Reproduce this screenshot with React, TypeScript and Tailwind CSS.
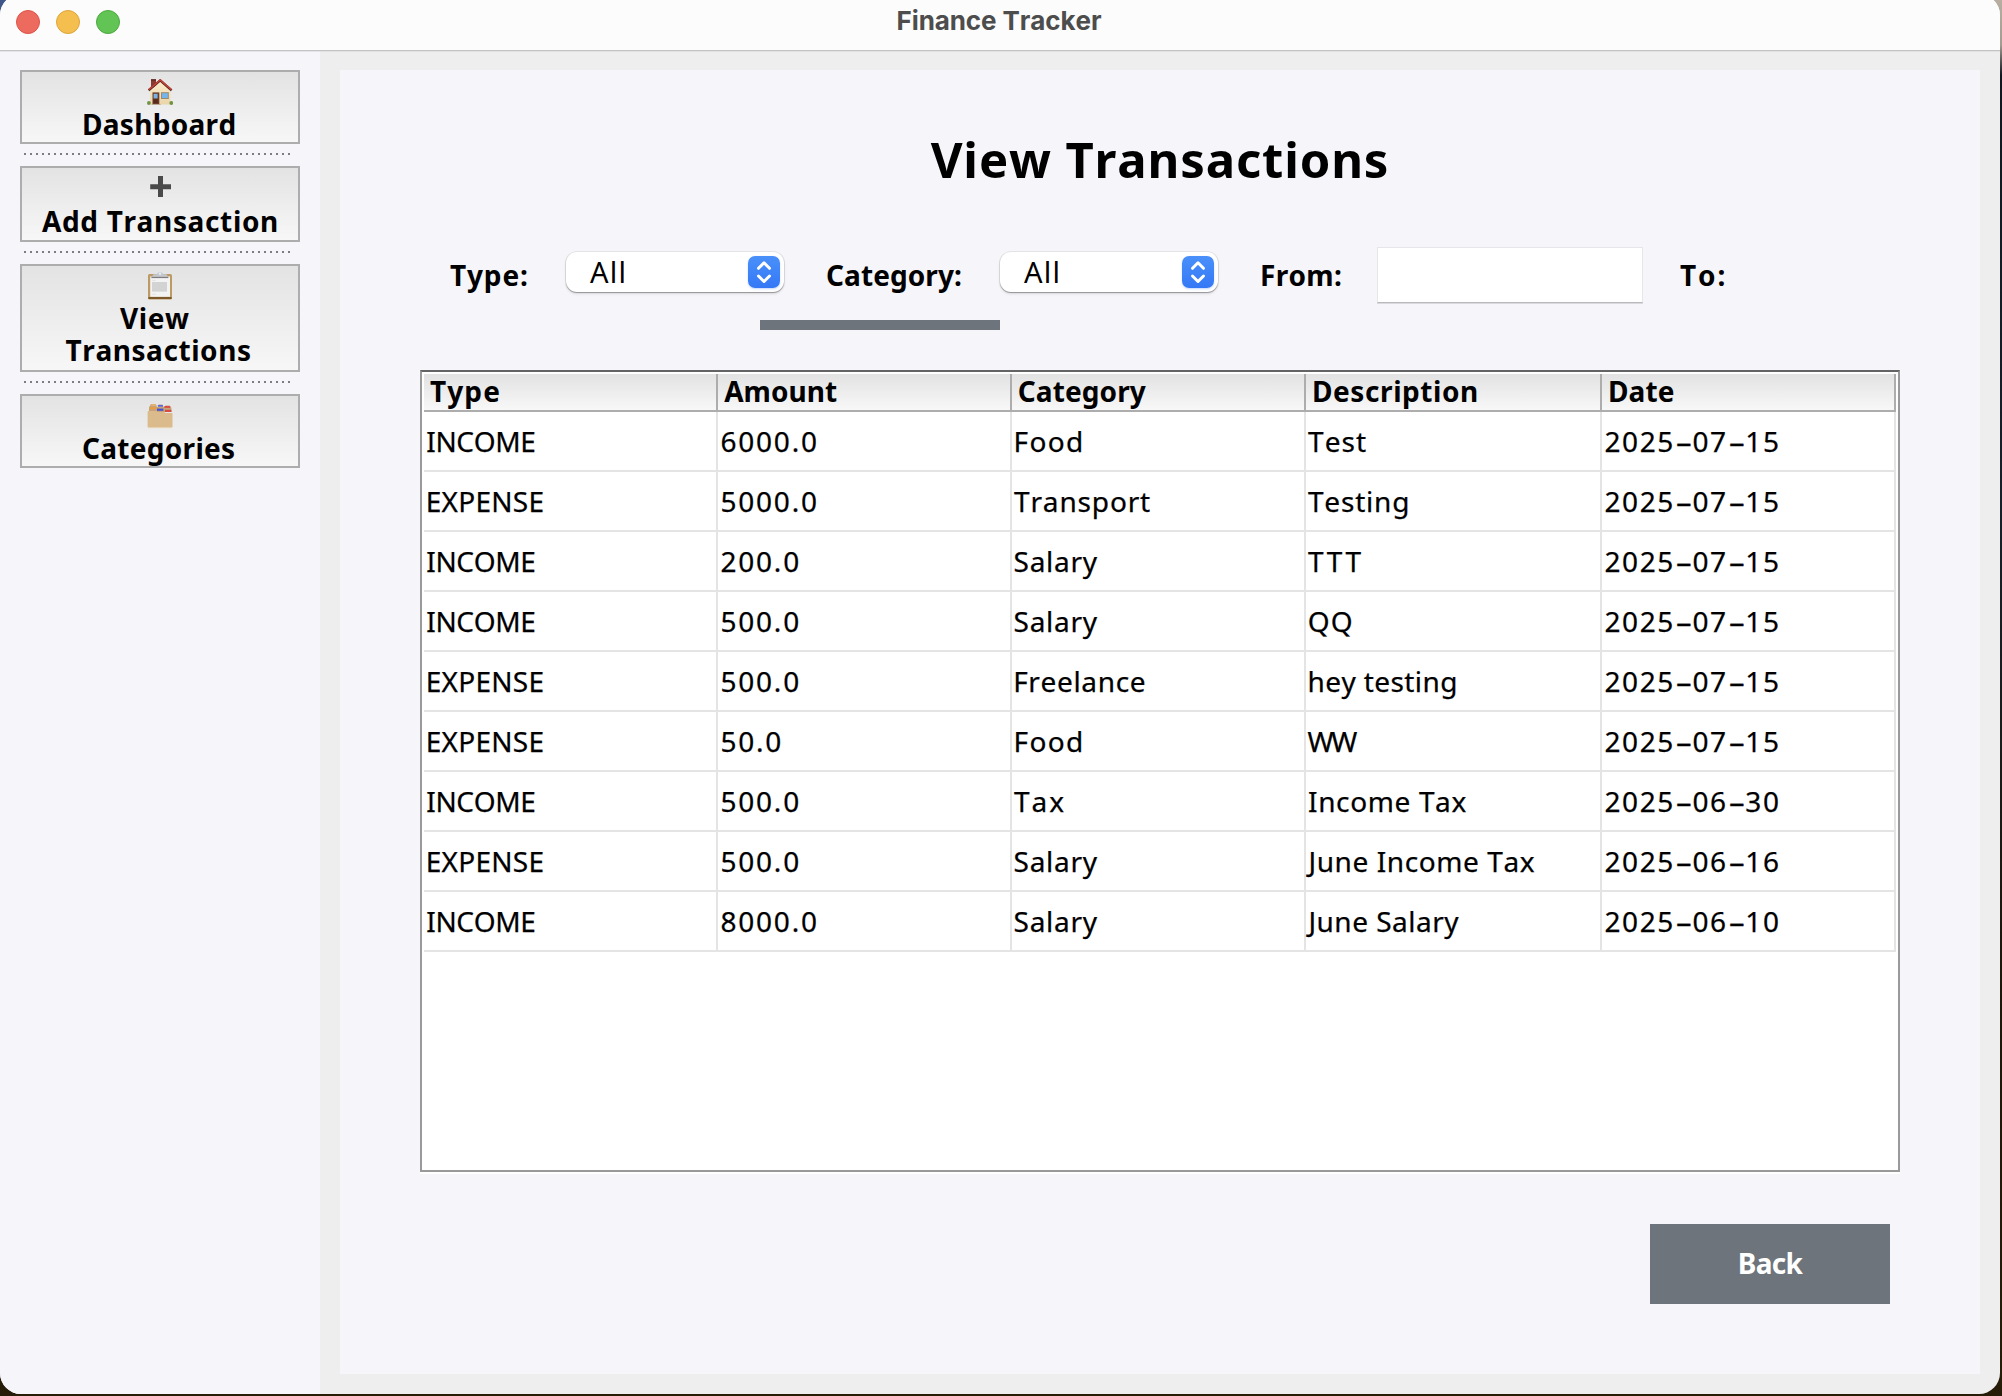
import type { ReactNode } from "react";

function HouseIcon() {
  return (
    <svg viewBox="0 0 26 26" className="h-[26px] w-[26px]">
      <defs>
        <linearGradient id="wall" x1="0" y1="0" x2="0" y2="1">
          <stop offset="0" stopColor="#fbeccb" />
          <stop offset="1" stopColor="#ead5aa" />
        </linearGradient>
      </defs>
      <rect x="4" y="0.3" width="5" height="8" fill="#8a3a30" />
      <rect x="4" y="0.3" width="5" height="1.4" fill="#5d2a24" />
      <path d="M3 12 L13.2 2 L23.4 12 V25.4 H3 Z" fill="url(#wall)" />
      <path d="M1.6 11.4 L13.2 1.4 L24.6 11.4" fill="none" stroke="#5e231e" strokeWidth="2.4" />
      <path d="M1.8 10.6 L13.2 0.9 L24.4 10.6" fill="none" stroke="#c2453b" strokeWidth="1.4" />
      <rect x="5.5" y="13.4" width="6.8" height="12" fill="#6d3a27" />
      <rect x="6.6" y="14.8" width="4" height="4.6" fill="#79b3e6" />
      <rect x="6.4" y="20.4" width="4.4" height="3.6" fill="#57291b" />
      <rect x="14" y="13.2" width="7.8" height="6.8" fill="#9b8a6b" />
      <rect x="15" y="14.2" width="5.8" height="4.8" fill="#76b4ee" />
      <rect x="4.6" y="25" width="9" height="1" fill="#b9ab93" />
      <ellipse cx="1.9" cy="24" rx="1.9" ry="1.9" fill="#6f9443" />
      <ellipse cx="24.3" cy="24" rx="1.9" ry="1.9" fill="#6f9443" />
    </svg>
  );
}

function PlusIcon() {
  return (
    <svg viewBox="0 0 26 26" className="h-[26px] w-[26px]">
      <path d="M11 1h5v8.2h8v5h-8V22h-5v-7.8H3.2v-5H11z" fill="#4a4a4a" />
    </svg>
  );
}

function ClipboardIcon() {
  return (
    <svg viewBox="0 0 26 26" className="h-[26px] w-[26px] overflow-visible">
      <rect x="1" y="1" width="24" height="25.6" rx="1.6" fill="#bd9a63" />
      <rect x="1.4" y="24" width="23.2" height="2" fill="#7c5a2c" />
      <rect x="3.2" y="3.4" width="19.8" height="20.4" fill="#f3f3f3" />
      <rect x="5" y="9" width="15" height="9.6" fill="#d3d3d3" />
      <path d="M5.4 7.4h3M5.4 21.2h3.4" stroke="#d9d9d9" strokeWidth="0.8" />
      <rect x="4.4" y="3.6" width="17" height="1.5" fill="#7d7d80" />
      <path d="M5 3.6L6.6 1.2h3.2L11 -0.6h4L16.2 1.2h3.2L21 3.6z" fill="#c3c9d0" />
      <circle cx="13" cy="0.8" r="1.1" fill="#eef2f6" />
    </svg>
  );
}

function FolderIcon() {
  return (
    <svg viewBox="0 0 26 26" className="h-[26px] w-[26px]">
      <path d="M2 9V4.6l1.8-3.4L4.6 1h4L10 4h1l0.6-2.4h3.8L16.6 4h1l0.8-1.6h4.2L24.4 5v4z" fill="#c3a377" />
      <path d="M4.6 1h4l1 2H3.8z" fill="#e3b172" />
      <rect x="3" y="4.2" width="6.4" height="2" fill="#ee9b3d" />
      <rect x="10.8" y="2" width="5.2" height="1.6" fill="#5a68e8" />
      <rect x="10" y="5.6" width="6.4" height="2.2" fill="#4450d6" />
      <rect x="17.4" y="3" width="5.8" height="1.9" fill="#dc4d45" />
      <rect x="18" y="6.8" width="6.4" height="2.2" fill="#d64a42" />
      <path d="M0.6 8.9q0-0.8 1-0.8h8l1 1h6.8l1 0.8h6.2q0.9 0 0.9 0.9V23.4q0 1.4-1.2 1.4H1.8q-1.2 0-1.2-1.4z" fill="#dbba8b" />
      <rect x="1" y="24.4" width="24" height="0.8" fill="#e9d9bd" />
    </svg>
  );
}

function DottedRule() {
  return (
    <div className="mt-[9px] mb-[11px] ml-1 h-0.5 w-[266px] bg-[repeating-linear-gradient(90deg,#7c7c82_0px,#7c7c82_2px,transparent_2px,transparent_6px)]" />
  );
}

function NavButton({ className, icon, children }: { className: string; icon: ReactNode; children: ReactNode }) {
  return (
    <button
      className={`${className} flex w-[280px] flex-col items-start border-2 border-[#adadad] bg-linear-to-b from-[#e3e3e3] to-[#f7f7f7] pt-[7px] text-left text-[28px] leading-8 font-bold text-black`}
    >
      <span className="ml-[125px] block h-[26px]">{icon}</span>
      {children}
    </button>
  );
}

function Select() {
  return (
    <div className="mt-[5px] flex h-10 w-[218px] items-center justify-between rounded-[11px] bg-white pr-1 pl-[24px] shadow-[0_0_0_1px_rgba(0,0,0,0.07),0_1px_1px_rgba(0,0,0,0.28),0_2px_3px_rgba(0,0,0,0.1)]">
      <span className="text-[29px] leading-[42px] tracking-[1.2px]">All</span>
      <span className="flex h-8 w-8 rounded-[7px] bg-linear-to-b from-[#4a90fa] to-[#3478f6] shadow-[0_1px_2px_rgba(52,120,246,0.3)]">
        <svg viewBox="0 0 32 32" className="h-8 w-8" fill="none" stroke="#fff" strokeWidth="3" strokeLinecap="round" strokeLinejoin="round">
          <path d="M10.5 12.3L16 6.8l5.5 5.5M10.5 20L16 25.5l5.5-5.5" />
        </svg>
      </span>
    </div>
  );
}

type Cell = { text: string; fit: string };

const INCOME: Cell = { text: "INCOME", fit: "pl-[2.3px] tracking-[-0.35px]" };
const EXPENSE: Cell = { text: "EXPENSE", fit: "pl-[1.8px] tracking-[0.25px]" };
const SALARY: Cell = { text: "Salary", fit: "pl-[1.6px] tracking-[0.7px]" };
const FOOD: Cell = { text: "Food", fit: "pl-[1.5px] tracking-[1.4px]" };
const amount = (text: string): Cell => ({ text, fit: "pl-[2.4px] tracking-[1.8px]" });

const ROWS: { cells: Cell[]; date: string }[] = [
  { cells: [INCOME, amount("6000.0"), FOOD, { text: "Test", fit: "pl-[2px] tracking-[1.1px]" }], date: "2025-07-15" },
  { cells: [EXPENSE, amount("5000.0"), { text: "Transport", fit: "pl-[2px] tracking-[0.85px]" }, { text: "Testing", fit: "pl-[2px] tracking-[0.8px]" }], date: "2025-07-15" },
  { cells: [INCOME, amount("200.0"), SALARY, { text: "TTT", fit: "pl-[2px] tracking-[3.2px]" }], date: "2025-07-15" },
  { cells: [INCOME, amount("500.0"), SALARY, { text: "QQ", fit: "pl-[1.7px] tracking-[1.2px]" }], date: "2025-07-15" },
  { cells: [EXPENSE, amount("500.0"), { text: "Freelance", fit: "pl-[1.2px] tracking-[0.65px]" }, { text: "hey testing", fit: "pl-[1.6px] tracking-[0.4px]" }], date: "2025-07-15" },
  { cells: [EXPENSE, amount("50.0"), FOOD, { text: "WW", fit: "pl-[1.6px] tracking-[-2.4px]" }], date: "2025-07-15" },
  { cells: [INCOME, amount("500.0"), { text: "Tax", fit: "pl-[2px] tracking-[2px]" }, { text: "Income Tax", fit: "pl-[2px] tracking-[0.64px]" }], date: "2025-06-30" },
  { cells: [EXPENSE, amount("500.0"), SALARY, { text: "June Income Tax", fit: "pl-[2.4px] tracking-[0.6px]" }], date: "2025-06-16" },
  { cells: [INCOME, amount("8000.0"), SALARY, { text: "June Salary", fit: "pl-[2.4px] tracking-[0.5px]" }], date: "2025-06-10" },
];

const HEADERS: Cell[] = [
  { text: "Type", fit: "pl-[6px] tracking-[1.1px]" },
  { text: "Amount", fit: "pl-[6.2px] tracking-[0.05px]" },
  { text: "Category", fit: "pl-[5.8px] tracking-[0.1px]" },
  { text: "Description", fit: "pl-[6px] tracking-[0.58px]" },
  { text: "Date", fit: "pl-[6px] tracking-[0.1px]" },
];

function DateText({ value }: { value: string }) {
  return (
    <>
      {value.split("").map((ch, i) =>
        ch === "-" ? (
          <span key={i} className="inline-block w-[17.6px] scale-x-[1.9] text-center tracking-normal">
            -
          </span>
        ) : (
          ch
        ),
      )}
    </>
  );
}

function TransactionsTable() {
  return (
    <div className="mt-10 ml-20 h-[802px] w-[1480px] border-2 border-[#999999] border-t-[#646464] bg-white p-0.5 shadow-[0_2px_0_#ffffff]">
      <div className="grid grid-cols-[294px_294px_294px_296px_294px] border-b-2 border-[#adadad] bg-linear-to-b from-[#e2e2e2] to-[#f8f8f8] text-[28px] leading-[34px] font-bold">
        {HEADERS.map((h) => (
          <div key={h.text} className={`h-9 border-r-2 border-[#adadad] whitespace-nowrap ${h.fit}`}>
            {h.text}
          </div>
        ))}
      </div>
      {ROWS.map((row, i) => (
        <div key={i} className="grid h-[60px] grid-cols-[294px_294px_294px_296px_294px] border-b-2 border-[#e4e4e4] text-[28px] leading-[58px] [-webkit-text-stroke:0.25px_black]">
          {row.cells.map((c, j) => (
            <div key={j} className={`border-r-2 border-[#e4e4e4] whitespace-nowrap ${c.fit}`}>
              {c.text}
            </div>
          ))}
          <div className="border-r-2 border-[#e4e4e4] pl-[2.4px] tracking-[1.6px] whitespace-nowrap">
            <DateText value={row.date} />
          </div>
        </div>
      ))}
    </div>
  );
}

export default function App() {
  return (
    <div className="h-[1396px] w-[2002px] overflow-hidden bg-[linear-gradient(180deg,#b8afa2_0px,#a39a90_45px,#10171f_75px,#16202a_500px,#1d1509_1000px,#261c08_1396px)] [font-kerning:none]">
      <div className="h-full bg-[linear-gradient(135deg,#3f5688_0px,#3f5688_30px,transparent_30px)]">
        <div className="flex h-full flex-col font-['Noto_Sans',sans-serif] text-black">
          <div className="-mt-1.5 flex h-[1400px] w-[2000px] shrink-0 flex-col overflow-hidden rounded-[21px] bg-[#eeeeee]">
            <header className="flex h-[57px] shrink-0 border-b border-[#c3c3c3] bg-[#fcfcfc] pt-1.5">
              <div className="mt-2.5 ml-4 flex w-[280px] gap-4">
                <span className="h-6 w-6 rounded-full border border-[#dc5349] bg-[#ed6a5f]" />
                <span className="h-6 w-6 rounded-full border border-[#dda43c] bg-[#f5bf4f]" />
                <span className="h-6 w-6 rounded-full border border-[#4ca93f] bg-[#61c454]" />
              </div>
              <h1 className="mr-[298px] flex-1 text-center font-['Inter',sans-serif] text-[26px] leading-[41px] font-bold tracking-[-0.08px] text-[#4d4d4d]">
                Finance Tracker
              </h1>
            </header>

            <div className="flex h-[1343px] shadow-[inset_0_1px_0_#e2e2e2]">
              <nav className="flex w-80 flex-col bg-[#f5f5fa] pt-[19px] pl-5 shadow-[inset_0_1px_0_#e4e4e8]">
                <NavButton className="h-[74px]" icon={<HouseIcon />}>
                  <span className="mt-[3px] ml-[60px] tracking-[0.3px]">Dashboard</span>
                </NavButton>
                <DottedRule />
                <NavButton className="h-[76px]" icon={<PlusIcon />}>
                  <span className="mt-1 ml-5 tracking-[0.65px]">Add Transaction</span>
                </NavButton>
                <DottedRule />
                <NavButton className="h-[108px]" icon={<ClipboardIcon />}>
                  <span className="mt-[3px] ml-[98px] tracking-[0.6px]">View</span>
                  <span className="ml-[43.6px] tracking-[0.56px]">Transactions</span>
                </NavButton>
                <DottedRule />
                <NavButton className="h-[74px]" icon={<FolderIcon />}>
                  <span className="mt-[3px] ml-[60px] tracking-[0.3px]">Categories</span>
                </NavButton>
              </nav>

              <main className="mt-[19px] ml-5 h-[1304px] w-[1640px] bg-[#f5f5fa]">
                <h2 className="mt-[57px] text-center text-[49px] leading-[64px] font-bold tracking-[0.86px]">View Transactions</h2>

                <div className="mt-14 flex h-14 items-start text-[28px] leading-8">
                  <label className="mt-3 ml-[110px] w-[116px] font-bold tracking-[0.85px]">Type:</label>
                  <Select />
                  <label className="mt-3 ml-[42px] w-[174px] font-bold tracking-[0.08px]">Category:</label>
                  <Select />
                  <label className="mt-3 ml-[42px] w-[117px] font-bold tracking-[0.3px]">From:</label>
                  <div className="h-14 w-[266px] border border-[#e6e6e9] border-b-[#b9b9bc] bg-white shadow-[0_1px_0_#d9d9de]" />
                  <label className="mt-3 ml-[37px] font-bold tracking-[1.9px]">To:</label>
                </div>
                <div className="mt-[17px] ml-[420px] h-2.5 w-60 bg-[#6d747b]" />

                <TransactionsTable />

                <button className="mt-[52px] ml-[1310px] block h-20 w-60 bg-[#6d747b] pb-0.5 pl-[87.8px] text-left text-[28px] leading-[78px] font-bold tracking-[-0.72px] text-white">
                  Back
                </button>
              </main>
            </div>
          </div>
        </div>
      </div>
    </div>
  );
}
